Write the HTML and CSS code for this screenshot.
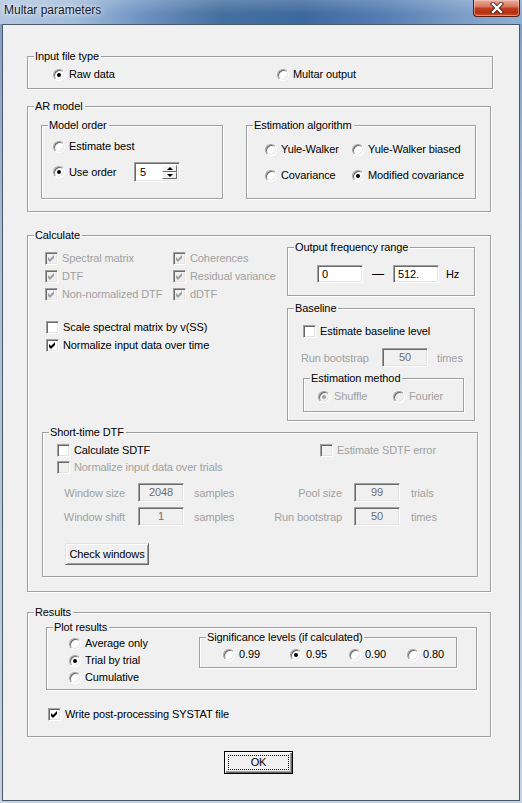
FILE: index.html
```html
<!DOCTYPE html>
<html>
<head>
<meta charset="utf-8">
<title>Multar parameters</title>
<link rel="stylesheet" href="styles.css">
</head>
<body>
<div class="window">
  <div class="titlebar">
    <div class="title">Multar parameters</div>
    <div class="close">
      <svg width="14" height="12" viewBox="0 0 14 12"><path d="M3 2 L11 10 M11 2 L3 10" stroke="#4a2418" stroke-width="4.2" stroke-linecap="square"/><path d="M3 2 L11 10 M11 2 L3 10" stroke="#fff" stroke-width="2.4" stroke-linecap="square"/></svg>
    </div>
  </div>
  <div class="client">

    <div class="group g-input">
      <span class="legend">Input file type</span>
      <div class="row input-row">
        <label class="opt input-first"><i class="rb on"></i>Raw data</label>
        <label class="opt"><i class="rb"></i>Multar output</label>
      </div>
    </div>

    <div class="group g-ar">
      <span class="legend">AR model</span>
      <div class="group g-order">
        <span class="legend">Model order</span>
        <div class="row order-best"><label class="opt"><i class="rb"></i>Estimate best</label></div>
        <div class="order-use">
          <label class="opt order-use-lbl"><i class="rb on"></i>Use order</label>
          <div class="spin">
            <span class="spin-val">5</span>
            <span class="spin-btns"><b class="sbtn up"></b><b class="sbtn dn"></b></span>
          </div>
        </div>
      </div>
      <div class="group g-alg">
        <span class="legend">Estimation algorithm</span>
        <div class="row alg-row1">
          <label class="opt alg-first"><i class="rb"></i>Yule-Walker</label>
          <label class="opt"><i class="rb"></i>Yule-Walker biased</label>
        </div>
        <div class="row alg-row2">
          <label class="opt alg-first"><i class="rb"></i>Covariance</label>
          <label class="opt"><i class="rb on"></i>Modified covariance</label>
        </div>
      </div>
    </div>

    <div class="group g-calc">
      <span class="legend">Calculate</span>
      <div class="calc-top">
        <div class="calc-left">
          <div class="chk-grid">
            <label class="opt dis"><i class="cb dis"><svg viewBox="0 0 11 11"><polygon points="2,4 4,6 8,2 8,5 4,9 2,7"/></svg></i>Spectral matrix</label>
            <label class="opt dis"><i class="cb dis"><svg viewBox="0 0 11 11"><polygon points="2,4 4,6 8,2 8,5 4,9 2,7"/></svg></i>Coherences</label>
            <label class="opt dis"><i class="cb dis"><svg viewBox="0 0 11 11"><polygon points="2,4 4,6 8,2 8,5 4,9 2,7"/></svg></i>DTF</label>
            <label class="opt dis"><i class="cb dis"><svg viewBox="0 0 11 11"><polygon points="2,4 4,6 8,2 8,5 4,9 2,7"/></svg></i>Residual variance</label>
            <label class="opt dis"><i class="cb dis"><svg viewBox="0 0 11 11"><polygon points="2,4 4,6 8,2 8,5 4,9 2,7"/></svg></i>Non-normalized DTF</label>
            <label class="opt dis"><i class="cb dis"><svg viewBox="0 0 11 11"><polygon points="2,4 4,6 8,2 8,5 4,9 2,7"/></svg></i>dDTF</label>
          </div>
          <div class="calc-opts">
            <label class="opt calc-opt"><i class="cb"></i>Scale spectral matrix by v(SS)</label>
            <label class="opt calc-opt"><i class="cb"><svg viewBox="0 0 11 11"><polygon points="2,4 4,6 8,2 8,5 4,9 2,7"/></svg></i>Normalize input data over time</label>
          </div>
        </div>
        <div class="calc-right">
          <div class="group g-freq">
            <span class="legend">Output frequency range</span>
            <div class="freq-row">
              <span class="edit">0</span>
              <span class="dash">—</span>
              <span class="edit">512.</span>
              <span class="hz">Hz</span>
            </div>
          </div>
          <div class="group g-base">
            <span class="legend">Baseline</span>
            <div class="row base-chk"><label class="opt"><i class="cb"></i>Estimate baseline level</label></div>
            <div class="boot-row">
              <span class="dis boot-lbl">Run bootstrap</span>
              <span class="edit dis">50</span>
              <span class="dis boot-unit">times</span>
            </div>
            <div class="group g-method">
              <span class="legend">Estimation method</span>
              <div class="row method-row">
                <label class="opt dis method-first"><i class="rb dis on"></i>Shuffle</label>
                <label class="opt dis"><i class="rb dis"></i>Fourier</label>
              </div>
            </div>
          </div>
        </div>
      </div>

      <div class="group g-sdtf">
        <span class="legend">Short-time DTF</span>
        <div class="row sd-a">
          <label class="opt sd-first"><i class="cb"></i>Calculate SDTF</label>
          <label class="opt dis"><i class="cb dis"></i>Estimate SDTF error</label>
        </div>
        <div class="row sd-b">
          <label class="opt dis"><i class="cb dis"></i>Normalize input data over trials</label>
        </div>
        <div class="sd-row sd-c">
          <span class="dis lbl-l">Window size</span>
          <span class="edit dis sd-edit-l">2048</span>
          <span class="dis unit-l">samples</span>
          <span class="dis lbl-r">Pool size</span>
          <span class="edit dis sd-edit-r">99</span>
          <span class="dis unit-r">trials</span>
        </div>
        <div class="sd-row sd-d">
          <span class="dis lbl-l">Window shift</span>
          <span class="edit dis sd-edit-l">1</span>
          <span class="dis unit-l">samples</span>
          <span class="dis lbl-r">Run bootstrap</span>
          <span class="edit dis sd-edit-r">50</span>
          <span class="dis unit-r">times</span>
        </div>
        <button class="btn btn-check" type="button">Check windows</button>
      </div>
    </div>

    <div class="group g-res">
      <span class="legend">Results</span>
      <div class="group g-plot">
        <span class="legend">Plot results</span>
        <div class="plot-left">
          <label class="opt plot-opt"><i class="rb"></i>Average only</label>
          <label class="opt plot-opt"><i class="rb on"></i>Trial by trial</label>
          <label class="opt plot-opt"><i class="rb"></i>Cumulative</label>
        </div>
        <div class="group g-sig">
          <span class="legend">Significance levels (if calculated)</span>
          <div class="row sig-row">
            <label class="opt sig-1"><i class="rb"></i>0.99</label>
            <label class="opt sig-2"><i class="rb on"></i>0.95</label>
            <label class="opt sig-3"><i class="rb"></i>0.90</label>
            <label class="opt"><i class="rb"></i>0.80</label>
          </div>
        </div>
      </div>
      <div class="row res-write">
        <label class="opt"><i class="cb"><svg viewBox="0 0 11 11"><polygon points="2,4 4,6 8,2 8,5 4,9 2,7"/></svg></i>Write post-processing SYSTAT file</label>
      </div>
    </div>

    <button class="btn ok" type="button"><span class="ok-focus">OK</span></button>
  </div>
</div>
</body>
</html>
```

FILE: styles.css
```css
* { box-sizing: border-box; margin: 0; padding: 0; }

html, body { width: 522px; height: 803px; overflow: hidden; }

body {
  font-family: "Liberation Sans", Arial, sans-serif;
  font-size: 11px;
  letter-spacing: -0.1px;
  color: #000;
  background: #b9c9dc;
}

.window {
  width: 522px;
  height: 803px;
  display: flex;
  flex-direction: column;
  background: linear-gradient(180deg, #7d9cc4 0%, #a9bdd6 30%, #c4d2e2 100%);
}

/* ---------- title bar ---------- */
.titlebar {
  height: 24px;
  flex: none;
  display: flex;
  justify-content: space-between;
  align-items: flex-start;
  background:
    linear-gradient(180deg, rgba(255,255,255,0.18), rgba(255,255,255,0) 60%),
    linear-gradient(90deg, #b3c8e1 0%, #a2bcdb 14%, #6e93c2 27%, #44709f 42%, #3d689e 58%, #557fb3 74%, #7a9cc6 88%, #8fafd3 100%);
}

.title {
  margin: 3px 0 0 4px;
  font-size: 12px;
  letter-spacing: 0;
  line-height: 15px;
  color: #151c26;
  text-shadow: 0 0 6px rgba(255,255,255,0.9), 0 0 3px rgba(255,255,255,0.7);
}

.close {
  width: 47px;
  height: 17px;
  margin-right: 2px;
  display: flex;
  align-items: center;
  justify-content: center;
  border: 1px solid #5b1d12;
  border-top: none;
  border-radius: 0 0 4px 4px;
  background: linear-gradient(180deg, #e9ab9b 0%, #d97a63 40%, #c33e20 52%, #b52f10 80%, #cf5a33 100%);
  box-shadow: inset 0 0 0 1px rgba(255,220,210,0.45);
}

/* ---------- client area ---------- */
.client {
  margin-left: 2px;
  width: 518px;
  height: 777px;
  flex: none;
  border: 1px solid #4b5666;
  background: #f0f0f0;
  padding-top: 31px;
}

/* ---------- group boxes ---------- */
.group {
  position: relative;
  border: 1px solid #a0a0a0;
  box-shadow: inset 1px 1px 0 #fff, 1px 1px 0 #fff;
}

.legend {
  position: absolute;
  top: -7px;
  left: 6px;
  padding: 0 2px 0 1px;
  background: #f0f0f0;
  line-height: 13px;
  white-space: nowrap;
}

.row {
  display: flex;
  align-items: center;
  height: 13px;
}

.opt {
  display: flex;
  align-items: center;
  white-space: nowrap;
  line-height: 13px;
}

.dis { color: #a0a0a0; }

/* radio */
.rb {
  width: 12px;
  height: 12px;
  flex: none;
  margin-right: 4px;
  border-radius: 50%;
  background: #fff;
  border: 1px solid;
  border-color: #a0a0a0 #fff #fff #a0a0a0;
  box-shadow: inset 1px 1px 0 #696969, inset -1px -1px 0 #e3e3e3;
  display: flex;
  align-items: center;
  justify-content: center;
}
.rb.on::after {
  content: "";
  width: 4px;
  height: 4px;
  border-radius: 50%;
  background: #000;
}
.rb.dis { background: #f0f0f0; }
.rb.dis.on::after { background: #a0a0a0; }

/* checkbox */
.cb {
  width: 13px;
  height: 13px;
  flex: none;
  margin-right: 4px;
  background: #fff;
  border: 1px solid;
  border-color: #a0a0a0 #fff #fff #a0a0a0;
  box-shadow: inset 1px 1px 0 #696969, inset -1px -1px 0 #e3e3e3;
  display: flex;
}
.cb svg { width: 11px; height: 11px; display: block; fill: #000; }
.cb.dis { background: #f0f0f0; }
.cb.dis svg { fill: #a0a0a0; }

/* edit */
.edit {
  width: 46px;
  height: 18px;
  flex: none;
  display: flex;
  align-items: center;
  padding-left: 4px;
  background: #fff;
  border: 1px solid;
  border-color: #a0a0a0 #fff #fff #a0a0a0;
  box-shadow: inset 1px 1px 0 #696969, inset -1px -1px 0 #e3e3e3;
  line-height: 13px;
}
.edit.dis {
  background: #f0f0f0;
  color: #6d6d74;
  justify-content: center;
  padding-left: 0;
  height: 19px;
}

/* buttons */
.btn {
  font-family: inherit;
  font-size: 11px;
  letter-spacing: inherit;
  color: #000;
  background: #f0f0f0;
  border: 1px solid;
  border-color: #e3e3e3 #696969 #696969 #e3e3e3;
  box-shadow: inset 1px 1px 0 #fff, inset -1px -1px 0 #a0a0a0;
  display: flex;
  align-items: center;
  justify-content: center;
  line-height: 13px;
}

/* ---------- input file type ---------- */
.g-input {
  margin-left: 24px;
  width: 466px;
  height: 33px;
}
.input-row { margin-top: 11px; padding-left: 25px; }
.input-first { width: 224px; }

/* ---------- AR model ---------- */
.g-ar {
  margin: 17px 0 0 24px;
  width: 464px;
  height: 106px;
  display: flex;
  align-items: flex-start;
  padding: 18px 0 0 13px;
}
.g-order { width: 182px; height: 74px; margin-right: 23px; padding-left: 11px; }
.order-best { margin-top: 14px; }
.order-use {
  display: flex;
  align-items: center;
  height: 20px;
  margin-top: 9px;
}
.order-use-lbl { width: 81px; }

.spin {
  width: 46px;
  height: 20px;
  display: flex;
  padding: 2px;
  background: #fff;
  border: 1px solid;
  border-color: #a0a0a0 #fff #fff #a0a0a0;
  box-shadow: inset 1px 1px 0 #696969, inset -1px -1px 0 #e3e3e3;
}
.spin-val { flex: 1; display: flex; align-items: center; padding-left: 3px; line-height: 13px; }
.spin-btns { width: 15px; display: flex; flex-direction: column; }
.sbtn {
  height: 8px;
  background: #f0f0f0;
  border: 1px solid;
  border-color: #fff #696969 #696969 #fff;
  display: flex;
  align-items: center;
  justify-content: center;
}
.sbtn.up::after {
  content: "";
  border-left: 3px solid transparent;
  border-right: 3px solid transparent;
  border-bottom: 3px solid #000;
}
.sbtn.dn::after {
  content: "";
  border-left: 3px solid transparent;
  border-right: 3px solid transparent;
  border-top: 3px solid #000;
}

.g-alg { width: 230px; height: 74px; padding-left: 18px; }
.alg-row1 { margin-top: 17px; }
.alg-row2 { margin-top: 13px; }
.alg-first { width: 87px; }

/* ---------- Calculate ---------- */
.g-calc {
  margin: 23px 0 0 24px;
  width: 464px;
  height: 357px;
}
.calc-top { display: flex; align-items: flex-start; }
.calc-left { width: 259px; padding: 13px 0 0 17px; }
.chk-grid {
  display: grid;
  grid-template-columns: 128px auto;
  grid-auto-rows: 18px;
  align-items: center;
}
.calc-opts { margin-top: 15px; padding-left: 1px; display: flex; flex-direction: column; }
.calc-opt { height: 18px; }

.calc-right { width: 188px; padding-top: 11px; }
.g-freq { height: 49px; }
.freq-row {
  display: flex;
  align-items: center;
  margin: 17px 0 0 29px;
}
.dash { width: 30px; text-align: center; font-size: 12px; }
.hz { margin-left: 7px; }

.g-base { height: 113px; margin-top: 12px; }
.base-chk { margin: 16px 0 0 15px; }
.boot-row {
  display: flex;
  align-items: center;
  height: 19px;
  margin: 10px 0 0 13px;
}
.boot-lbl { width: 81px; }
.boot-unit { margin-left: 9px; }
.g-method { margin: 11px 0 0 15px; width: 161px; height: 34px; }
.method-row { margin-top: 11px; padding-left: 14px; }
.method-first { width: 75px; }

/* short-time DTF */
.g-sdtf { margin: 11px 0 0 14px; width: 436px; height: 145px; }
.sd-a { margin: 11px 0 0 14px; }
.sd-first { width: 263px; }
.sd-b { margin: 4px 0 0 14px; }
.sd-row { display: flex; align-items: center; height: 19px; }
.sd-c { margin-top: 9px; }
.sd-d { margin-top: 5px; }
.lbl-l { width: 82px; text-align: right; }
.sd-edit-l { margin-left: 13px; }
.unit-l { margin-left: 10px; width: 56px; }
.lbl-r { width: 92px; text-align: right; }
.sd-edit-r { margin-left: 12px; }
.unit-r { margin-left: 11px; }
.btn-check { margin: 17px 0 0 22px; width: 84px; height: 22px; }

/* ---------- Results ---------- */
.g-res {
  margin: 20px 0 0 24px;
  width: 464px;
  height: 125px;
}
.g-plot {
  margin: 14px 0 0 18px;
  width: 431px;
  height: 63px;
  display: flex;
  align-items: flex-start;
}
.plot-left { width: 152px; padding: 7px 0 0 22px; display: flex; flex-direction: column; }
.plot-opt { height: 17px; }
.g-sig { margin-top: 9px; width: 258px; height: 31px; }
.sig-row { margin-top: 10px; padding-left: 23px; }
.sig-1 { width: 67px; }
.sig-2 { width: 59px; }
.sig-3 { width: 58px; }
.res-write { margin: 18px 0 0 20px; }

/* ---------- OK ---------- */
.ok {
  margin: 14px 0 0 221px;
  width: 69px;
  height: 23px;
  border: 1px solid #000;
  box-shadow: inset 1px 1px 0 #fff, inset -1px -1px 0 #696969, inset -2px -2px 0 #a0a0a0;
  padding: 3px;
}
.ok-focus {
  flex: 1;
  align-self: stretch;
  display: flex;
  align-items: center;
  justify-content: center;
  border: 1px dotted #000;
}
```
